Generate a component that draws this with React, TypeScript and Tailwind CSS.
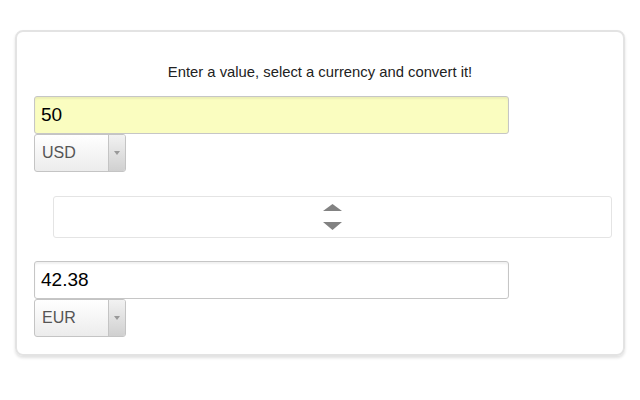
function CurrencySelect({ value }: { value: string }) {
  return (
    <div className="flex h-[38px] w-[92px] overflow-hidden rounded-[3px] border border-[#c4c4c4] bg-gradient-to-b from-white to-[#ececec]">
      <div className="flex flex-1 items-center pl-[7px] text-[16px] text-[#555]">{value}</div>
      <div className="flex w-[17px] items-center justify-center border-l border-[#c4c4c4] bg-gradient-to-b from-[#f2f2f2] to-[#d0d0d0]">
        <svg width="6" height="4" viewBox="0 0 6 4">
          <path d="M0 0h6L3 4z" fill="#999" />
        </svg>
      </div>
    </div>
  );
}

function AmountInput({ value, yellow }: { value: string; yellow?: boolean }) {
  return (
    <div
      className={`flex h-[38px] w-[475px] items-center rounded-[3px] border border-[#c6c6c6] px-[6px] text-[19px] text-black shadow-[inset_0_2px_2px_rgba(0,0,0,0.06)] ${
        yellow ? "bg-[#fafdc0]" : "bg-white"
      }`}
    >
      {value}
    </div>
  );
}

export default function App() {
  return (
    <div className="h-[400px] w-[640px] bg-white pt-[30px] pl-[15px]" style={{ fontFamily: '"Liberation Sans", Arial, sans-serif' }}>
      <div className="h-[326px] w-[610px] rounded-[8px] border-2 border-[#e3e3e3] px-[17px] pt-[32px] shadow-[0_2px_3px_rgba(0,0,0,0.12)]">
        <p className="h-[16px] text-center text-[14.8px] leading-[16px] text-[#222]">
          Enter a value, select a currency and convert it!
        </p>
        <div className="mt-[16px]">
          <AmountInput value="50" yellow />
          <CurrencySelect value="USD" />
        </div>
        <div className="ml-[19px] mt-[24px] flex h-[42px] w-[559px] flex-col items-center justify-center gap-[11px] rounded-[3px] border border-[#e4e4e4]">
          <svg width="19" height="7" viewBox="0 0 19 7">
            <path d="M0 7L9.5 0L19 7z" fill="#828282" />
          </svg>
          <svg width="19" height="8" viewBox="0 0 19 8">
            <path d="M0 0h19L9.5 8z" fill="#828282" />
          </svg>
        </div>
        <div className="mt-[23px]">
          <AmountInput value="42.38" />
          <CurrencySelect value="EUR" />
        </div>
      </div>
    </div>
  );
}
